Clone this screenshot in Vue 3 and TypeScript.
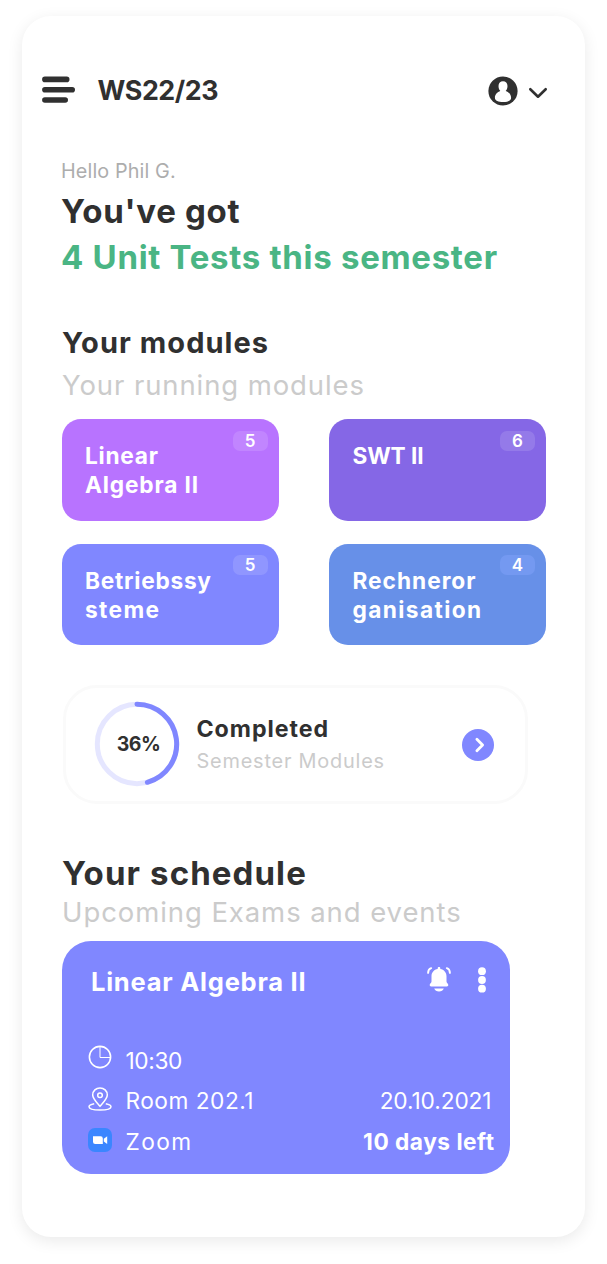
<script setup lang="ts">
interface Line {
  text: string
  tracking: number
}

interface Module {
  lines: Line[]
  count: number
  tone: string
}

const modules: Module[] = [
  { lines: [{ text: 'Linear', tracking: 0.75 }, { text: 'Algebra II', tracking: 0.85 }], count: 5, tone: 'orchid' },
  { lines: [{ text: 'SWT II', tracking: -0.1 }], count: 6, tone: 'violet' },
  { lines: [{ text: 'Betriebssy', tracking: 0.75 }, { text: 'steme', tracking: 1.4 }], count: 5, tone: 'indigo' },
  { lines: [{ text: 'Rechneror', tracking: 1 }, { text: 'ganisation', tracking: 1.4 }], count: 4, tone: 'azure' },
]
</script>

<template>
  <main class="panel">
    <header class="topbar">
      <svg class="menu" width="34" height="28" viewBox="0 0 34 28">
        <path d="M2.900 3.400H24.700M2.900 13.700H30.200M2.900 24H23.200" stroke="#303030" stroke-width="5.600" stroke-linecap="round" />
      </svg>
      <h1 class="term">WS22/23</h1>
      <svg class="user" width="30" height="30" viewBox="0 0 30 30">
        <circle cx="15" cy="15" r="14.600" fill="#303030" />
        <path
          d="M15 5.200c2.700 0 4.500 2 4.500 4.700 0 2.100-.7 3.900-1.800 5 3 1 5.400 3.500 5.400 6.800 0 3-3.600 4.300-8.100 4.300s-8.100-1.300-8.100-4.300c0-3.300 2.400-5.800 5.400-6.800-1.100-1.100-1.800-2.900-1.800-5 0-2.700 1.800-4.700 4.500-4.700z"
          fill="#fff"
        />
      </svg>
      <svg class="caret" width="20" height="12" viewBox="0 0 20 12">
        <path d="M2.300 2.200L10 9.700L17.700 2.200" fill="none" stroke="#303030" stroke-width="2.600" stroke-linecap="round" stroke-linejoin="round" />
      </svg>
    </header>

    <section class="intro">
      <p class="hello">Hello Phil G.</p>
      <h2 class="lead">You've got</h2>
      <h2 class="lead green">4 Unit Tests this semester</h2>
    </section>

    <section class="modules">
      <h3 class="heading">Your modules</h3>
      <p class="sub">Your running modules</p>
      <div class="grid">
        <article v-for="m in modules" :key="m.lines[0].text" class="module" :class="m.tone">
          <div v-for="line in m.lines" :key="line.text" :style="{ letterSpacing: line.tracking + 'px' }">{{ line.text }}</div>
          <span class="count">{{ m.count }}</span>
        </article>
      </div>
    </section>

    <section class="progress">
      <div class="ring">
        <svg width="86" height="86" viewBox="0 0 86 86">
          <circle cx="43" cy="43" r="39.700" fill="none" stroke="#e5e6ff" stroke-width="5" />
          <path d="M43 3.300A39.700 39.700 0 0 1 53.400 81.300" fill="none" stroke="#8087ff" stroke-width="5" stroke-linecap="round" />
        </svg>
        <span class="percent">36%</span>
      </div>
      <div class="summary">
        <div class="done">Completed</div>
        <div class="what">Semester Modules</div>
      </div>
      <svg class="go" width="32" height="32" viewBox="0 0 32 32">
        <circle cx="16" cy="16" r="16" fill="#8087ff" />
        <path d="M14.900 10.200L20.600 16L14.900 21.800" fill="none" stroke="#fff" stroke-width="2.800" stroke-linecap="round" stroke-linejoin="round" />
      </svg>
    </section>

    <section class="schedule">
      <h3 class="heading big">Your schedule</h3>
      <p class="sub tight">Upcoming Exams and events</p>
      <article class="event">
        <div class="event-head">
          <h4 class="event-title">Linear Algebra II</h4>
          <svg class="bell" width="26" height="26" viewBox="0 0 26 26">
            <path
              d="M13 1c.8 0 1.300.5 1.300 1.300v.8c3.700.6 6.200 3.500 6.200 7.200v5.200c0 1.500 1.800 1.800 1.800 3.500 0 .9-.5 1.400-1.400 1.400H5.100c-.9 0-1.400-.5-1.400-1.400 0-1.700 1.800-2 1.800-3.500v-5.200c0-3.700 2.500-6.600 6.200-7.200v-.8C11.700 1.500 12.200 1 13 1z"
              fill="#fff"
            />
            <path d="M8.200 22.400h9.600c-.7 1.800-2.500 3-4.800 3s-4.100-1.200-4.800-3z" fill="#fff" />
            <path d="M2.100 6.900C2.100 4.500 3.300 2.700 5.200 2.100M23.900 6.900C23.900 4.500 22.700 2.700 20.800 2.100" fill="none" stroke="#fff" stroke-width="1.900" stroke-linecap="round" />
          </svg>
          <svg class="dots" width="8" height="26" viewBox="0 0 8 26">
            <circle cx="4" cy="4.200" r="3.900" fill="#fff" />
            <circle cx="4" cy="13" r="3.900" fill="#fff" />
            <circle cx="4" cy="21.700" r="3.900" fill="#fff" />
          </svg>
        </div>
        <div class="row">
          <svg class="icon up-3" width="24" height="24" viewBox="0 0 24 24" fill="none" stroke="#fff">
            <circle cx="12" cy="12" r="10.600" stroke-width="1.600" />
            <path d="M12 1.500V12.500H22.500" stroke-width="1" />
          </svg>
          <span class="time">10:30</span>
        </div>
        <div class="row">
          <svg class="icon up-2" width="24" height="24" viewBox="0 0 24 24" fill="none" stroke="#fff" stroke-width="1.500">
            <path d="M12 19.200C8.500 15.200 4.700 11.800 4.700 8C4.700 3.900 8 .9 12 .9S19.300 3.900 19.300 8C19.300 11.800 15.500 15.200 12 19.200Z" />
            <circle cx="12" cy="8.200" r="2.300" />
            <path d="M6.200 16.700C3 17.300 1 18.400 1 19.700C1 21.700 5.500 23 12 23S23 21.700 23 19.700C23 18.400 21 17.300 17.800 16.700" />
          </svg>
          <span class="room">Room 202.1</span>
          <span class="date">20.10.2021</span>
        </div>
        <div class="row">
          <svg class="icon up-1" width="24" height="24" viewBox="0 0 24 24">
            <rect width="24" height="24" rx="7" fill="#3b86ff" />
            <path d="M5 8.200H12.600Q14.800 8.200 14.800 10.400V16H7.200Q5 16 5 13.800Z" fill="#fff" />
            <path d="M15.800 10.800L19.200 8.300V15.900L15.800 13.400Z" fill="#fff" />
          </svg>
          <span class="zoom">Zoom</span>
          <span class="left">10 days left</span>
        </div>
      </article>
    </section>
  </main>
</template>

<style>
body {
  margin: 0;
  background: #fff;
}
</style>

<style scoped>
h1,
h2,
h3,
h4,
p {
  margin: 0;
  font-weight: 700;
}

.panel {
  box-sizing: border-box;
  width: 563px;
  height: 1221px;
  margin: 15.500px 0 27.500px 22px;
  padding: 54.500px 0 0 40px;
  border-radius: 29px;
  background: #fff;
  box-shadow: 0 4px 16px rgba(0, 0, 0, 0.085);
  color: #303030;
  font-family: Inter, "Liberation Sans", sans-serif;
  white-space: nowrap;
  overflow: hidden;
}

svg {
  display: block;
  flex: none;
}

.topbar {
  display: flex;
  align-items: center;
  height: 40px;
  margin-left: -20px;
}

.term {
  flex: 1;
  margin-left: 21.500px;
  font-size: 26.800px;
  letter-spacing: -0.4px;
  line-height: 40px;
}

.user {
  margin-top: 2px;
}

.caret {
  margin: 6px 37.500px 0 10px;
}

.intro {
  margin: 46px 0 0 -1px;
}

.hello {
  color: #adadad;
  font-size: 19.800px;
  font-weight: 400;
  letter-spacing: 0.12px;
  line-height: 30px;
}

.lead {
  font-size: 33px;
  letter-spacing: 0.7px;
  line-height: 46px;
}

.lead:first-of-type {
  margin-top: 2px;
}

.green {
  color: #4ab584;
}

.modules {
  margin-top: 42px;
}

.heading {
  font-size: 29px;
  letter-spacing: 1.050px;
  line-height: 42px;
}

.sub {
  color: #cbcbcb;
  font-size: 27.500px;
  font-weight: 400;
  letter-spacing: 0.900px;
  line-height: 42px;
}

.grid {
  display: grid;
  grid-template-columns: 217px 217px;
  grid-auto-rows: 101.500px;
  gap: 23px 50.400px;
  margin-top: 13.200px;
}

.module {
  position: relative;
  box-sizing: border-box;
  padding: 22.300px 0 0 23px;
  border-radius: 19px;
  color: #fff;
  font-size: 22.700px;
  font-weight: 700;
  line-height: 29px;
}

.orchid {
  background: #b873ff;
}

.violet {
  background: #8567e6;
}

.indigo {
  background: #8087ff;
}

.azure {
  background: #6790e8;
}

.count {
  position: absolute;
  top: 11.800px;
  right: 11.500px;
  width: 35px;
  height: 20px;
  border-radius: 7px;
  background: rgba(255, 255, 255, 0.13);
  font-size: 17px;
  font-weight: 600;
  line-height: 20.500px;
  text-align: center;
}

.azure .count {
  background: #7499f1;
}

.progress {
  box-sizing: border-box;
  display: flex;
  align-items: center;
  width: 465.500px;
  height: 119px;
  margin: 39.500px 0 0 0.500px;
  padding: 0 31px 0 28.500px;
  border: 3px solid #fafafa;
  border-radius: 34px;
}

.ring {
  display: grid;
  place-items: center;
}

.ring > * {
  grid-area: 1 / 1;
}

.percent {
  margin-left: 3px;
  font-size: 19.500px;
  font-weight: 700;
  letter-spacing: -0.5px;
  line-height: 28px;
}

.summary {
  flex: 1;
  margin: 2px 0 0 16.500px;
}

.done {
  font-size: 23.200px;
  font-weight: 700;
  letter-spacing: 0.950px;
  line-height: 31.500px;
}

.what {
  color: #cbcbcb;
  font-size: 19.900px;
  font-weight: 400;
  letter-spacing: 0.800px;
  line-height: 30px;
}

.go {
  margin-top: 1.500px;
}

.schedule {
  margin-top: 48.300px;
}

.big {
  font-size: 33px;
  letter-spacing: 1.100px;
  line-height: 43px;
}

.tight {
  font-size: 27.500px;
  letter-spacing: 0.920px;
  line-height: 34px;
}

.event {
  box-sizing: border-box;
  width: 448px;
  height: 233px;
  margin-top: 12px;
  padding: 21px 16px 0 25.500px;
  border-radius: 29px;
  background: #8087ff;
  color: #fff;
}

.event-head {
  display: flex;
  height: 38px;
  margin-bottom: 40px;
}

.event-title {
  flex: 1;
  margin-left: 3.500px;
  font-size: 25.500px;
  letter-spacing: 0.770px;
  line-height: 39px;
}

.bell {
  margin: 4px 26px 0 0;
}

.dots {
  margin: 5px 8px 0 0;
}

.row {
  display: flex;
  align-items: center;
  height: 40.800px;
  font-size: 22.700px;
  font-weight: 400;
  line-height: 41.500px;
}

.icon {
  margin-right: 14px;
}

.up-3 {
  margin-bottom: 6.500px;
}

.up-2 {
  margin-bottom: 5px;
}

.up-1 {
  margin-bottom: 4px;
}

.time {
  letter-spacing: -0.4px;
}

.room {
  letter-spacing: 0.500px;
}

.zoom {
  letter-spacing: 1.400px;
}

.date {
  margin: 0 2.500px 0 auto;
  letter-spacing: -0.1px;
}

.left {
  margin: 0 -0.500px 0 auto;
  font-weight: 700;
  letter-spacing: 0.5px;
}
</style>
